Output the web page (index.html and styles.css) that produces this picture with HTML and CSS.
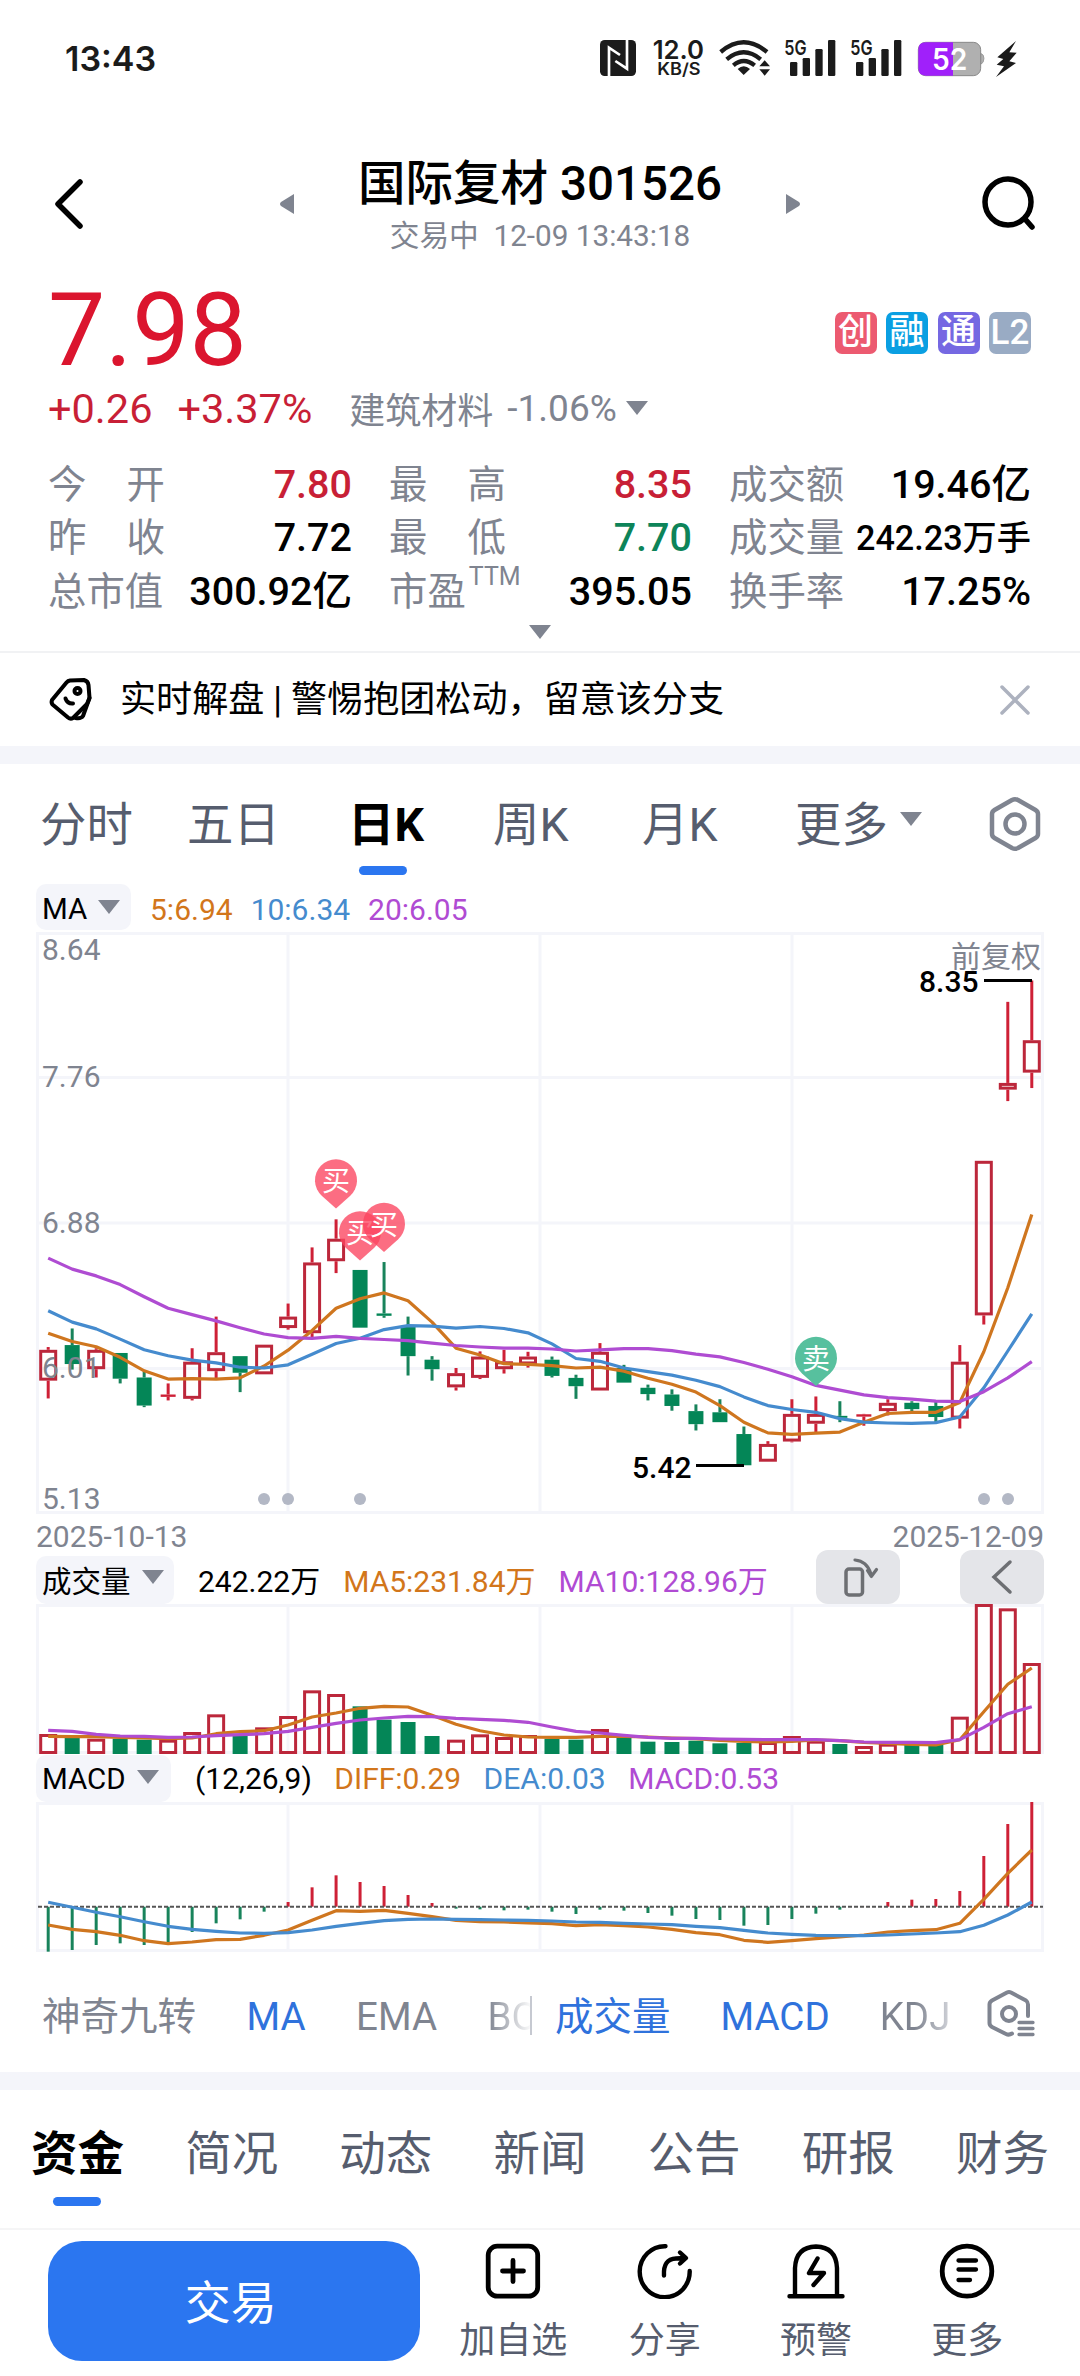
FILE: index.html
```html
<!DOCTYPE html>
<html lang="zh-CN">
<head>
<meta charset="utf-8">
<title>国际复材 301526</title>
<link rel="stylesheet" href="styles.css">
</head>
<body>
<div class="status">
  <span class="clock">13:43</span>
  <svg class="status-icons" viewBox="0 0 1380 180">
    <rect x="60" y="33" width="108" height="108" rx="14" fill="#1b1b1b"/>
    <path d="M87 141V56L120 78M141 33V119L106 96" fill="none" stroke="#fff" stroke-width="8"/>
    <g class="st-text">
      <text x="218" y="91" font-size="79" textLength="154" lengthAdjust="spacingAndGlyphs">12.0</text>
      <text x="232" y="138" font-size="50" textLength="130" lengthAdjust="spacingAndGlyphs">KB/S</text>
      <text x="613" y="78" font-size="62" textLength="67" lengthAdjust="spacingAndGlyphs">5G</text>
      <text x="811" y="78" font-size="62" textLength="67" lengthAdjust="spacingAndGlyphs">5G</text>
    </g>
    <g fill="none" stroke="#1b1b1b" stroke-width="13">
      <path d="M422 69Q491 11 561 69"/><path d="M440 91Q491 49 542 91"/><path d="M460 109Q491 83 524 109"/>
    </g>
    <path d="M473 120Q491 104 510 120L491 138Z" fill="#1b1b1b"/>
    <path d="M538 112L554 94L570 112ZM538 121L554 140L570 121Z" fill="#1b1b1b"/>
    <g fill="#1b1b1b">
      <rect x="630" y="99" width="22" height="42" rx="4"/><rect x="668" y="87" width="22" height="54" rx="4"/><rect x="706" y="60" width="22" height="81" rx="4"/><rect x="744" y="33" width="22" height="108" rx="4"/>
      <rect x="828" y="99" width="22" height="42" rx="4"/><rect x="866" y="87" width="22" height="54" rx="4"/><rect x="904" y="60" width="22" height="81" rx="4"/><rect x="942" y="33" width="22" height="108" rx="4"/>
    </g>
    <path d="M1202 73Q1212 76 1212 88Q1212 102 1202 106Z" fill="#b0b0b0" stroke="#888" stroke-width="2"/>
    <rect x="1015" y="40" width="187" height="100" rx="22" fill="#b0b0b0" stroke="#888" stroke-width="3"/>
    <path d="M1119 40H1037Q1015 40 1015 62V118Q1015 140 1037 140H1119Z" fill="#a020fa"/>
    <text x="1056" y="124" font-size="88" class="st-text batt" textLength="106" lengthAdjust="spacingAndGlyphs">52</text>
    <path d="M1308 36L1252 85L1270 90L1250 107L1272 112L1248 144L1308 102L1288 97L1310 71L1288 70Z" fill="#1b1b1b"/>
  </svg>
</div>

<header class="header">
  <svg class="back" viewBox="0 0 32 54"><path d="M28 5L6 27L28 49" fill="none" stroke="#000" stroke-width="5.500" stroke-linecap="round" stroke-linejoin="round"/></svg>
  <svg class="arrow" viewBox="0 0 14 20"><path d="M14 0V20L1 12Q-1 10 1 8Z" fill="#7f8490"/></svg>
  <div class="titles">
    <h1>国际复材 301526</h1>
    <p>交易中&nbsp; 12-09 13:43:18</p>
  </div>
  <svg class="arrow" viewBox="0 0 14 20"><path d="M0 0V20L13 12Q15 10 13 8Z" fill="#7f8490"/></svg>
  <svg class="search" viewBox="0 0 56 56"><circle cx="27" cy="26" r="23" fill="none" stroke="#000" stroke-width="5.500"/><path d="M44 43L51 51" stroke="#000" stroke-width="5.500" stroke-linecap="round"/></svg>
</header>

<section class="quote">
  <div class="price-row">
    <span class="price">7.98</span>
    <div class="badges"><b class="b1">创</b><b class="b2">融</b><b class="b3">通</b><b class="b4">L2</b></div>
  </div>
  <div class="change-row"><span class="chg">+0.26</span><span class="chg">+3.37%</span><span class="sector">建筑材料</span><span class="sector-chg">-1.06%</span><i class="caret"></i></div>
  <div class="stats">
    <div class="stat"><span class="wide">今<i></i>开</span><b class="up">7.80</b></div>
    <div class="stat"><span class="wide">最<i></i>高</span><b class="up">8.35</b></div>
    <div class="stat"><span>成交额</span><b>19.46亿</b></div>
    <div class="stat"><span class="wide">昨<i></i>收</span><b>7.72</b></div>
    <div class="stat"><span class="wide">最<i></i>低</span><b class="down">7.70</b></div>
    <div class="stat"><span>成交量</span><b class="small">242.23万手</b></div>
    <div class="stat"><span>总市值</span><b>300.92亿</b></div>
    <div class="stat"><span class="pe">市盈<small>TTM</small></span><b>395.05</b></div>
    <div class="stat"><span>换手率</span><b>17.25%</b></div>
  </div>
  <div class="expand"><i class="caret"></i></div>
</section>

<section class="notice">
  <svg class="tag" viewBox="0 0 70 70"><g fill="none" stroke="#000" stroke-width="4" stroke-linecap="round" stroke-linejoin="round"><path d="M31 15.500L45 15Q49 16 49.500 20L50.500 33L48 39L34 53Q31.500 54.500 29 52.500L13.500 39.500Q12 37.500 13 35L27.500 17.500Q29 15.800 31 15.500Z"/><path d="M50.500 33L44 51Q42 54 36.500 53"/><circle cx="38.500" cy="26" r="3"/><path d="M26.500 33.500Q28.500 39 34 38.500"/></g></svg>
  <span class="notice-text">实时解盘 | 警惕抱团松动，留意该分支</span>
  <svg class="close" viewBox="0 0 30 30"><path d="M2 2L28 28M28 2L2 28" stroke="#adb2bf" stroke-width="3.500" stroke-linecap="round"/></svg>
</section>
<div class="band"></div>

<nav class="periods">
  <span>分时</span><span>五日</span><span class="active">日K</span><span>周K</span><span>月K</span><span class="more">更多<i class="caret"></i></span>
  <svg class="hex" viewBox="0 0 52 56"><g fill="none" stroke="#7f8490" stroke-width="4.500" stroke-linejoin="round"><path d="M23 4Q26 2.500 29 4L46.500 14Q49 15.500 49 18V38Q49 40.500 46.500 42L29 52Q26 53.500 23 52L5.500 42Q3 40.500 3 38V18Q3 15.500 5.500 14Z"/><circle cx="26" cy="28" r="9.500"/></g></svg>
</nav>

<section class="charts">
  <div class="legend ma"><span class="pill p-ma">MA<i class="caret"></i></span><span class="o">5:6.94</span><span class="bl">10:6.34</span><span class="pu">20:6.05</span></div>
  <svg id="price" class="plot" width="1080" height="586" viewBox="0 930 1080 586"></svg>
  <div class="dates"><span>2025-10-13</span><span>2025-12-09</span></div>
  <div class="legend vol"><span class="pill p-vol">成交量<i class="caret"></i></span><span>242.22万</span><span class="o">MA5:231.84万</span><span class="pu">MA10:128.96万</span>
    <span class="tool rotate"><svg viewBox="0 0 84 54"><rect x="30" y="19" width="16.500" height="26" rx="3" fill="none" stroke="#6d6f73" stroke-width="3.500"/><path d="M39 10Q51 11 55 24M51.500 20.500L55.300 26.500L60.500 19.500" fill="none" stroke="#6d6f73" stroke-width="3.200" stroke-linecap="round" stroke-linejoin="round"/></svg></span>
    <span class="tool"><svg viewBox="0 0 84 54"><path d="M50 12L34 27L50 42" fill="none" stroke="#6d6f73" stroke-width="3.500" stroke-linecap="round"/></svg></span>
  </div>
  <svg id="volume" class="plot" width="1080" height="151" viewBox="0 1604 1080 151"></svg>
  <div class="legend macd"><span class="pill p-macd">MACD<i class="caret"></i></span><span>(12,26,9)</span><span class="o">DIFF:0.29</span><span class="bl">DEA:0.03</span><span class="pu">MACD:0.53</span></div>
  <svg id="macd" class="plot" width="1080" height="150" viewBox="0 1802 1080 150"></svg>
</section>

<nav class="indicators">
  <div class="ind-main"><span>神奇九转</span><span class="on">MA</span><span>EMA</span><span>BO</span></div>
  <div class="ind-sub"><span class="on">成交量</span><span class="on">MACD</span><span>KDJ</span></div>
  <svg class="hexlist" viewBox="0 0 54 54"><g fill="none" stroke="#7f8490" stroke-width="4" stroke-linecap="round" stroke-linejoin="round"><path d="M42 28V16.500Q42 14 40 12.500L25 4.500Q23 3.500 21 4.500L6 12.500Q3.500 14 3.500 16.500V35Q3.500 37.500 6 39L20 46Q23 47.500 26 45.500"/><circle cx="23" cy="26" r="7"/><path d="M33 34.500H47M33 40.500H47M33 46.500H47" stroke-width="3.300"/></g></svg>
</nav>
<div class="band"></div>

<nav class="sections"><span class="active">资金</span><span>简况</span><span>动态</span><span>新闻</span><span>公告</span><span>研报</span><span>财务</span></nav>

<footer class="actions">
  <button class="trade">交易</button>
  <a class="act"><svg viewBox="0 0 60 56"><g fill="none" stroke="#000" stroke-width="4.800" stroke-linecap="round"><rect x="5.200" y="3.200" width="49.500" height="50" rx="9"/><path d="M19.500 28H40.500M30 17.500V38.500"/></g></svg><span>加自选</span></a>
  <a class="act"><svg viewBox="0 0 60 56"><g fill="none" stroke="#000" stroke-width="4.400" stroke-linecap="round" stroke-linejoin="round"><path d="M30.500 3.200A25 25.500 0 1 0 54.700 28"/><path d="M29 32.500Q28 16 41 15.500L50 15M45 9.500L51 15L45 20.500"/></g></svg><span>分享</span></a>
  <a class="act"><svg viewBox="0 0 60 56"><g fill="none" stroke="#000" stroke-width="4.400" stroke-linecap="round" stroke-linejoin="round"><path d="M3.500 53.300H56.500M9 53V25Q10 4 30 3.500Q50 4 51 25V53M31.500 15.500L23 30H38L27.500 42"/></g></svg><span>预警</span></a>
  <a class="act"><svg viewBox="0 0 60 56"><g fill="none" stroke="#000" stroke-width="4.800" stroke-linecap="round"><ellipse cx="30" cy="28.200" rx="24.800" ry="25"/><path d="M21.500 17.500H39M21.500 26.500H39M21.500 37H33" stroke-width="4.300"/></g></svg><span>更多</span></a>
</footer>
<script src="chart.js"></script>
</body>
</html>
```
FILE: styles.css
```css
* { box-sizing: border-box; }
body { margin: 0; width: 1080px; background: #fff; color: #000; font-family: Roboto, "Noto Sans CJK SC", sans-serif; overflow-x: hidden; }
svg { display: block; flex: none; }
i { font-style: normal; }
h1, p { margin: 0; }
span, b, h1, p { white-space: nowrap; }
.caret { display: inline-block; flex: none; width: 0; height: 0; border: 11px solid transparent; border-top: 14px solid #7f8490; border-bottom: 0; }

.status { height: 118px; display: flex; align-items: center; justify-content: space-between; padding: 0 40px 0 65px; }
.clock { font: 600 34px/1 Inter, sans-serif; color: #1b1b1b; }
.status-icons { width: 460px; height: 60px; }
.st-text { font-family: Inter, sans-serif; font-weight: 600; fill: #1b1b1b; }
.batt { fill: #fff; }

.header { height: 144px; display: flex; align-items: center; padding: 28px 43px 0 52px; }
.back { width: 32px; height: 54px; }
.arrow { width: 14px; height: 20px; }
.back + .arrow { margin-left: 196px; }
.titles { width: 492px; display: flex; flex-direction: column; align-items: center; padding-top: 4px; }
.titles h1 { font-weight: 500; font-size: 47.500px; line-height: 60px; }
.titles p { font-size: 29.700px; line-height: 44px; color: #7f8490; }
.search { width: 56px; height: 56px; margin-left: auto; }

.quote { height: 389px; }
.price-row { height: 122px; padding: 14px 49px 0 48px; display: flex; align-items: center; justify-content: space-between; }
.price { font-size: 102px; line-height: 108px; color: #db152e; }
.badges { display: flex; gap: 9.500px; padding-top: 6px; }
.badges b { width: 42px; height: 42px; border-radius: 7px; color: #fff; font-weight: 500; font-size: 35px; line-height: 41px; text-align: center; }
.b1 { background: #ec5a70; } .b2 { background: #0a9fe2; } .b3 { background: #7568e2; } .b4 { background: #99abc4; }
.change-row { height: 48px; padding-left: 48px; display: flex; align-items: center; font-size: 41.500px; color: #c81f36; }
.chg + .chg { margin-left: 25px; }
.sector { margin-left: 37px; font-size: 36px; color: #7f8490; }
.sector-chg { margin: 0 9px 0 14px; font-size: 37px; color: #7f8490; }
.stats { margin-top: 26px; padding-left: 48px; display: grid; grid-template-columns: 304px 303px 302px; column-gap: 37px; grid-auto-rows: 53.500px; }
.stat { display: flex; justify-content: space-between; align-items: center; font-size: 38.400px; line-height: 50px; color: #7f8490; }
.stat b { font-weight: 500; font-size: 39.500px; color: #000; }
.stat b.small { font-size: 34.200px; }
.stat .up { color: #c81f36; } .stat .down { color: #0d8459; }
.wide { display: flex; } .wide i { width: 40px; }
.pe { display: flex; } .pe small { font-size: 25px; line-height: 20px; margin-left: 3px; }
.expand { height: 33px; display: flex; justify-content: center; align-items: center; padding-bottom: 6px; }

.notice { height: 95px; border-top: 2px solid #f1f2f4; display: flex; align-items: center; padding: 0 50px 0 39px; }
.tag { width: 70px; height: 70px; }
.notice-text { margin-left: 11px; font-size: 36.100px; padding-bottom: 7px; }
.close { width: 30px; height: 30px; margin-left: auto; }
.band { height: 18px; background: #f4f5fa; }

.periods { height: 120px; padding: 0 39px 0 40px; display: grid; grid-template-columns: 147px 161px 145px 149px 153px 1fr 52px; align-items: center; font-size: 46.400px; color: #565d6e; }
.periods span { justify-self: start; position: relative; top: -4px; }
.active { color: #000; font-weight: 700; position: relative; }
.active::after { content: ""; position: absolute; left: 50%; margin-left: -25px; bottom: -21px; width: 48px; height: 9px; border-radius: 4.500px; background: #2b76f0; }
.periods .active::after { margin-left: -27px; }
.more { display: flex; align-items: center; }
.more .caret { margin: -2px 0 0 12px; }
.hex { width: 52px; height: 56px; }

.legend { height: 46px; padding-left: 36px; display: flex; align-items: center; font-size: 30px; }
.pill { height: 46px; border-radius: 10px; background: #f4f5fa; padding-left: 6px; display: flex; align-items: center; margin-right: 19px; font-size: 29.500px; }
.pill .caret { margin-left: 11px; margin-top: -4px; }
.p-ma { width: 95px; } .p-ma ~ span { margin-right: 18px; padding-top: 4px; }
.ma .pill { padding-top: 3px; }
.o { color: #d2761b; } .bl { color: #458bce; } .pu { color: #b04bd3; }
.dates { height: 40px; padding: 0 36px 0 36px; display: flex; justify-content: space-between; font-size: 30px; line-height: 41px; color: #7f8490; }
.vol { height: 48px; }
.vol > span:not(.tool) { padding-bottom: 2px; }
.vol .pill { height: 48px; }
.p-vol { width: 138px; margin-right: 24px; }
.vol > span + span { margin-right: 23px; }
.tool { width: 84px; height: 54px; background: #e4e5e9; border-radius: 12px; margin-top: -6px; }
.tool svg { width: 84px; height: 54px; }
.vol .rotate { margin-left: auto; margin-right: 60px; }
.vol .tool:last-child { margin-right: 36px; }
.macd { height: 47px; }
.macd .pill { width: 135px; height: 47px; margin-right: 24px; }
.macd > span + span { margin-right: 22.500px; }

.grid { stroke: #f4f5fa; stroke-width: 3; fill: none; }
.up-s { stroke: #bc273b; fill: none; stroke-width: 3; }
.wick-up { stroke: #ce2036; stroke-width: 3; }
.dn { fill: #048657; }
.wick-dn { stroke: #18835b; stroke-width: 3; }
.ln { fill: none; stroke-width: 3.200; stroke-linejoin: round; }
.ln-o { stroke: #cf761f; } .ln-b { stroke: #458bce; } .ln-p { stroke: #af4cd2; }
.axis { font-size: 30px; fill: #7f8490; }
.mark { font-size: 30px; font-weight: 500; fill: #000; }
.pin-t { font-size: 28px; fill: #fff; text-anchor: middle; }
.mark-l { stroke: #000; stroke-width: 3; }
.dot { fill: #b3b8c5; }
.zero { stroke: #555; stroke-width: 2; stroke-dasharray: 4 2; }

.indicators { height: 120px; padding: 9px 40px 0 42px; display: flex; align-items: center; font-size: 38.500px; color: #7f8490; }
.ind-main, .ind-sub { display: flex; overflow: hidden; line-height: 50px; }
.ind-main { width: 490px; gap: 50.500px; border-right: 2px solid #c6c9d1; border-image: linear-gradient(transparent 10%, #c6c9d1 10% 85%, transparent 85%) 1; }
.ind-main span:last-child { background: linear-gradient(90deg, #7f8490, #fff 44px); -webkit-background-clip: text; background-clip: text; color: transparent; }
.ind-sub { margin-left: 23px; width: 396px; gap: 50px; }
.ind-sub span:last-child { background: linear-gradient(90deg, #7f8490 50%, #d0d2d8); -webkit-background-clip: text; background-clip: text; color: transparent; }
.on { color: #2f72dc; }
.hexlist { width: 54px; height: 54px; margin: -4px 0 0 35px; }

.sections { height: 138px; padding: 0 31px 20px; display: flex; align-items: center; justify-content: space-between; font-size: 46.500px; color: #565d6e; }
.sections .active::after { bottom: -23px; }

.actions { height: 148px; border-top: 2px solid #f5f5f6; display: flex; padding: 11px 37px 0 48px; }
.trade { width: 372px; height: 120px; border: 0; border-radius: 34px; background: #2b76f0; color: #fff; font: 46px "Noto Sans CJK SC", sans-serif; margin-right: 18px; padding: 0 6px 5px 0; }
.act { width: 151.500px; display: flex; flex-direction: column; align-items: center; font-size: 36px; line-height: 48px; color: #565d6e; padding-top: 2px; }
.act svg { width: 60px; height: 56px; margin-bottom: 18px; }
```
FILE: chart.js
```js
// x position of the n-th trading day
const X = i => 48.2 + i * 23.99;
const PY = v => 920 + v / 2.529;
// Volume and MACD plots share one grid of thirds of a pixel.
const VY = v => 1530 + v / 3;

// direction, high, body top, body bottom, low
const candles = [
['r',1080,1087,1165,1210],['g',1033,1075,1123,1137],['r',1083,1087,1136,1157],['g',1095,1095,1160,1172],['g',1142,1157,1228,1232],['r',1172,1200,1206,1215],
['r',1083,1117,1211,1215],['r',1003,1093,1141,1162],['g',1103,1103,1145,1194],['r',1074,1074,1149,1149],['r',970,1003,1032,1036],['r',828,866,1045,1055],
['r',757,806,863,893],['g',885,885,1031,1031],['g',865,995,1001,1006],['g',1003,1028,1103,1152],['g',1103,1112,1136,1165],['r',1133,1146,1182,1190],
['r',1091,1104,1158,1161],['r',1087,1116,1136,1147],['r',1092,1104,1124,1132],['g',1104,1112,1153,1157],['g',1150,1158,1179,1211],['r',1070,1092,1190,1190],
['g',1125,1133,1170,1170],['g',1175,1183,1199,1215],['g',1187,1200,1229,1241],['g',1225,1242,1275,1291],['g',1212,1245,1270,1270],['g',1281,1300,1379,1379],
['r',1318,1325,1370,1370],['r',1212,1249,1319,1321],['r',1205,1249,1274,1296],['g',1217,1254,1259,1270],['r',1249,1250,1256,1279],['r',1212,1221,1242,1253],
['g',1217,1221,1237,1245],['g',1217,1229,1257,1270],['r',1075,1117,1261,1286],['r',609,609,1000,1023],['r',207,412,429,458],['r',153,304,386,425]];
const ma5 = [1045,1066,1079,1106,1140,1161,1160,1161,1158,1128,1088,1038,982,958,943,963,1017,1083,1100,1122,1124,1127,1133,1131,1141,1159,1174,1194,1228,1270,1297,1301,1298,1295,1270,1248,1245,1245,1220,1092,930,745];
const ma10 = [988,1017,1034,1060,1087,1102,1113,1120,1131,1133,1125,1098,1071,1058,1036,1026,1027,1032,1028,1033,1044,1072,1109,1116,1133,1142,1151,1164,1180,1206,1228,1238,1245,1261,1270,1272,1273,1271,1257,1183,1090,996];
const ma20 = [855,883,900,922,953,982,998,1014,1031,1047,1056,1058,1053,1058,1061,1064,1070,1076,1080,1083,1083,1085,1090,1087,1084,1084,1089,1098,1105,1119,1136,1155,1177,1189,1201,1208,1212,1217,1218,1193,1158,1117];
const vol = [612,620,626,626,629,629,606,553,613,592,558,481,492,529,569,576,618,629,613,621,615,626,629,597,624,635,636,632,640,639,636,618,632,642,648,641,645,645,560,222,235,399];
const vma5 = [619,620,620,622,624,626,624,611,605,602,585,561,549,535,529,531,556,583,602,615,621,622,622,619,619,621,624,626,631,634,636,634,630,632,637,640,643,645,629,545,463,414];
const vma10 = [601,604,613,618,619,622,621,617,614,611,604,592,580,570,564,559,560,565,568,571,577,591,604,609,616,622,625,625,627,628,629,629,629,632,636,637,637,638,629,592,551,530];
const bars = [1265,1260,1245,1240,1245,1237,1206,1180,1168,1145,1116,1072,1036,1056,1068,1095,1119,1136,1138,1141,1139,1145,1152,1139,1142,1149,1157,1167,1170,1187,1185,1167,1151,1139,1130,1116,1109,1107,1083,978,882,816];
const diff = [1185,1198,1205,1216,1232,1241,1236,1229,1228,1216,1200,1171,1142,1144,1141,1150,1160,1171,1175,1176,1179,1181,1187,1184,1187,1191,1198,1208,1214,1231,1237,1232,1226,1221,1215,1206,1202,1199,1180,1108,1030,960];
const dea = [1117,1132,1147,1160,1175,1189,1198,1204,1209,1210,1208,1200,1189,1180,1172,1168,1167,1168,1169,1170,1171,1173,1176,1177,1180,1182,1184,1189,1193,1201,1209,1213,1216,1217,1217,1215,1212,1209,1205,1186,1155,1116];

const line = (d, y, c) => `<polyline class="ln ${c}" points="${d.map((v, i) => X(i).toFixed(1) + ',' + y(v).toFixed(1)).join(' ')}"/>`;
const seg = (x1, y1, x2, y2, c) => `<line class="${c}" x1="${x1}" y1="${y1}" x2="${x2}" y2="${y2}"/>`;
const frame = (t, b, rows) => `<rect class="grid" x="37.500" y="${t}" width="1005" height="${b - t}"/>` +
  [288, 540, 792].map(x => seg(x, t, x, b, 'grid')).join('') + rows.map(y => seg(37.5, y, 1042.5, y, 'grid')).join('');
const box = (i, t, b, up) => up
  ? (b - t < 3.5 ? `<rect x="${X(i) - 7.5}" y="${t}" width="15" height="${b - t}" fill="#ce2036"/>`
    : `<rect class="up-s" x="${X(i) - 7.5}" y="${t + 1.5}" width="15" height="${b - t - 3}"/>`)
  : `<rect class="dn" x="${X(i) - 7.5}" y="${t}" width="15" height="${b - t}"/>`;

let s = frame(933.5, 1512.5, [1077.4, 1222.9, 1368.4]);
s += `<text class="axis" x="951" y="967">前复权</text>`;
candles.forEach(([d, h, t, b, l], i) => {
  const w = d === 'r' ? 'wick-up' : 'wick-dn';
  s += seg(X(i), PY(h), X(i), PY(t), w) + seg(X(i), PY(b), X(i), PY(l), w) + box(i, PY(t), PY(b), d === 'r');
});
s += line(ma5, PY, 'ln-o') + line(ma10, PY, 'ln-b') + line(ma20, PY, 'ln-p');
[['8.64', 960], ['7.76', 1087], ['6.88', 1233], ['6.01', 1378], ['5.13', 1509]].forEach(([t, y]) => s += `<text class="axis" x="42" y="${y}">${t}</text>`);
s += `<text class="mark" x="919" y="992">8.35</text>` + seg(984, 980.5, 1032, 980.5, 'mark-l');
s += `<text class="mark" x="632" y="1478">5.42</text>` + seg(696, 1465.5, 744, 1465.5, 'mark-l');
[264, 288, 360, 984, 1008].forEach(x => s += `<circle class="dot" cx="${x}" cy="1499" r="6"/>`);
const pin = (x, y, c, t) => `<path d="M${x} ${y + 28.5}L${x - 14} ${y + 16}A21 21 0 1 1 ${x + 14} ${y + 16}Z" fill="${c}"/><text class="pin-t" x="${x}" y="${y + 11}">${t}</text>`;
s += pin(336, 1180, '#fb4560c8', '买') + pin(360, 1232, '#fb4560c8', '买') + pin(384, 1223.5, '#fb4560c8', '买') + pin(816, 1357.5, '#57c09e', '卖');
document.getElementById('price').innerHTML = s;

s = frame(1605.5, 1752.5, []);
vol.forEach((v, i) => s += box(i, VY(v), 1754, candles[i][0] === 'r'));
document.getElementById('volume').innerHTML = s + line(vma5, VY, 'ln-o') + line(vma10, VY, 'ln-p');

s = frame(1803.5, 1950.5, []);
bars.forEach((v, i) => s += seg(X(i), 1906.7, X(i), VY(v), v > 1130 ? 'wick-dn' : 'wick-up'));
s += seg(38, 1906.7, 1043, 1906.7, 'zero');
document.getElementById('macd').innerHTML = s + line(diff, VY, 'ln-o') + line(dea, VY, 'ln-b');
```
